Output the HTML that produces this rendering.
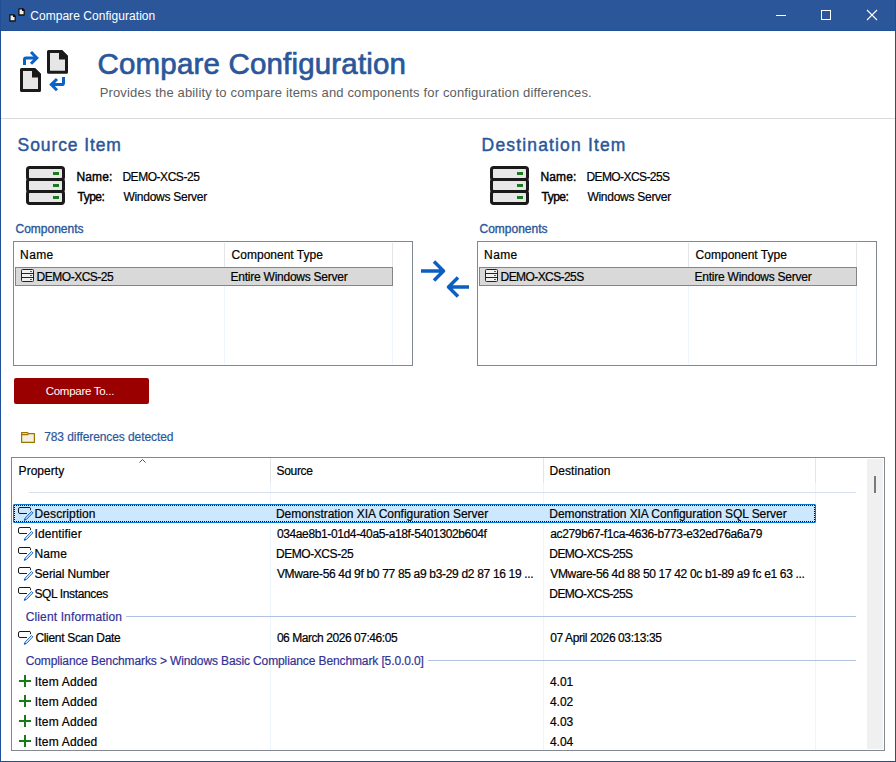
<!DOCTYPE html>
<html><head><meta charset="utf-8"><style>
html,body{margin:0;padding:0;}
body{width:896px;height:762px;overflow:hidden;position:relative;background:#fff;font-family:"Liberation Sans",sans-serif;}
.t{position:absolute;white-space:pre;line-height:40px;font-family:"Liberation Sans",sans-serif;}
.a{position:absolute;}
svg{position:absolute;overflow:visible;}
</style></head><body>
<!-- window frame -->
<div class="a" style="left:0;top:0;width:896px;height:30px;background:#2b579a"></div>
<div class="a" style="left:0;top:30px;width:896px;height:1px;background:#1f4f96"></div>
<div class="a" style="left:0;top:0;width:1px;height:762px;background:#1f4f96"></div>
<div class="a" style="left:895px;top:0;width:1px;height:762px;background:#1f4f96"></div>
<div class="a" style="left:0;top:761px;width:896px;height:1px;background:#1f4f96"></div>
<!-- title icon -->
<svg style="left:0;top:0" width="30" height="30" viewBox="0 0 30 30">
  <path d="M10.1 12.5V10.6H13.6" fill="none" stroke="#0a62c4" stroke-width="1.2"/>
  <path d="M12.6 9.2L14 10.6L12.6 12" fill="none" stroke="#0a62c4" stroke-width="1.2"/>
  <path d="M23.6 17.2V19.2H20" fill="none" stroke="#0a62c4" stroke-width="1.2"/>
  <path d="M21 17.8L19.6 19.2L21 20.6" fill="none" stroke="#0a62c4" stroke-width="1.2"/>
  <path d="M18.9 8.9H22.6L24.2 10.5V15H18.9Z" fill="#ececec" stroke="#111" stroke-width="1.3" stroke-linejoin="round"/>
  <path d="M22 8.3H23L24.8 10.1V11.1H22Z" fill="#111"/>
  <path d="M9.9 14.9H13.6L15.2 16.5V21H9.9Z" fill="#ececec" stroke="#111" stroke-width="1.3" stroke-linejoin="round"/>
  <path d="M13 14.3H14L15.8 16.1V17.1H13Z" fill="#111"/>
</svg>
<!-- window controls -->
<div class="a" style="left:776px;top:15px;width:10px;height:1px;background:#fff"></div>
<div class="a" style="left:821px;top:10px;width:8px;height:8px;border:1px solid #fff"></div>
<svg style="left:866px;top:9px" width="12" height="12" viewBox="0 0 12 12">
  <path d="M1 1L11 11M11 1L1 11" stroke="#fff" stroke-width="1.1"/>
</svg>
<!-- header icon -->
<svg style="left:0;top:40px" width="80" height="60" viewBox="0 40 80 60">
  <path d="M48.5 51.5H61.5L66.5 56.5V72.3H48.5Z" fill="#e6e6e6" stroke="#1a1a1a" stroke-width="3" stroke-linejoin="round"/>
  <path d="M59 50H62L68 56V59.5H59Z" fill="#1a1a1a"/>
  <path d="M21.5 69.5H34.5L39.5 74.5V90.4H21.5Z" fill="#e6e6e6" stroke="#1a1a1a" stroke-width="3" stroke-linejoin="round"/>
  <path d="M32 68H35L41 74V77.5H32Z" fill="#1a1a1a"/>
  <path d="M24.5 65V59.5Q24.5 58 26 58H36" fill="none" stroke="#0a62c4" stroke-width="3"/>
  <path d="M31 52L36.8 57.9L31 63.8" fill="none" stroke="#0a62c4" stroke-width="3"/>
  <path d="M63.5 77V83Q63.5 84.6 62 84.6H52" fill="none" stroke="#0a62c4" stroke-width="3"/>
  <path d="M57 79L51.3 84.6L57 90.3" fill="none" stroke="#0a62c4" stroke-width="3"/>
</svg>
<div class="a" style="left:1px;top:118px;width:894px;height:1px;background:#dadada"></div>
<!-- big server icons -->
<svg style="left:26px;top:166px" width="39" height="39" viewBox="0 0 39 39">
  <rect x="1.5" y="1.5" width="36" height="12" rx="2.2" fill="#e8e8e8" stroke="#1a1a1a" stroke-width="3"/>
  <rect x="1.5" y="13.5" width="36" height="12" rx="2.2" fill="#e8e8e8" stroke="#1a1a1a" stroke-width="3"/>
  <rect x="1.5" y="25.5" width="36" height="12" rx="2.2" fill="#e8e8e8" stroke="#1a1a1a" stroke-width="3"/>
  <rect x="27" y="6" width="6" height="3" fill="#1b7a1b"/>
  <rect x="27" y="18" width="6" height="3" fill="#1b7a1b"/>
  <rect x="27" y="30" width="6" height="3" fill="#1b7a1b"/>
</svg>
<svg style="left:490px;top:166px" width="39" height="39" viewBox="0 0 39 39">
  <rect x="1.5" y="1.5" width="36" height="12" rx="2.2" fill="#e8e8e8" stroke="#1a1a1a" stroke-width="3"/>
  <rect x="1.5" y="13.5" width="36" height="12" rx="2.2" fill="#e8e8e8" stroke="#1a1a1a" stroke-width="3"/>
  <rect x="1.5" y="25.5" width="36" height="12" rx="2.2" fill="#e8e8e8" stroke="#1a1a1a" stroke-width="3"/>
  <rect x="27" y="6" width="6" height="3" fill="#1b7a1b"/>
  <rect x="27" y="18" width="6" height="3" fill="#1b7a1b"/>
  <rect x="27" y="30" width="6" height="3" fill="#1b7a1b"/>
</svg>
<!-- list boxes -->
<div class="a" style="left:13px;top:241px;width:398px;height:123px;border:1px solid #828790"></div>
<div class="a" style="left:224px;top:243px;width:1px;height:24px;background:#e5e5e5"></div>
<div class="a" style="left:224px;top:267px;width:1px;height:97px;background:#eef4fd"></div>
<div class="a" style="left:392px;top:243px;width:1px;height:24px;background:#e5e5e5"></div>
<div class="a" style="left:392px;top:267px;width:1px;height:97px;background:#eef4fd"></div>
<div class="a" style="left:15px;top:267px;width:376px;height:17px;border:1px solid #858585;background:#d9d9d9"></div>
<svg style="left:21px;top:269px" width="13" height="13" viewBox="0 0 13 13">
  <rect x="0.5" y="0.5" width="12" height="12" rx="1" fill="#f0f0f0" stroke="#222" stroke-width="1"/>
  <path d="M0.5 4.5h12M0.5 8.5h12" stroke="#222" stroke-width="1"/>
  <path d="M9 2.5h2M9 6.5h2M9 10.5h2" stroke="#1b8a1b" stroke-width="1"/>
</svg>
<div class="a" style="left:477px;top:241px;width:398px;height:123px;border:1px solid #828790"></div>
<div class="a" style="left:688px;top:243px;width:1px;height:24px;background:#e5e5e5"></div>
<div class="a" style="left:688px;top:267px;width:1px;height:97px;background:#eef4fd"></div>
<div class="a" style="left:856px;top:243px;width:1px;height:24px;background:#e5e5e5"></div>
<div class="a" style="left:856px;top:267px;width:1px;height:97px;background:#eef4fd"></div>
<div class="a" style="left:479px;top:267px;width:376px;height:17px;border:1px solid #858585;background:#d9d9d9"></div>
<svg style="left:485px;top:269px" width="13" height="13" viewBox="0 0 13 13">
  <rect x="0.5" y="0.5" width="12" height="12" rx="1" fill="#f0f0f0" stroke="#222" stroke-width="1"/>
  <path d="M0.5 4.5h12M0.5 8.5h12" stroke="#222" stroke-width="1"/>
  <path d="M9 2.5h2M9 6.5h2M9 10.5h2" stroke="#1b8a1b" stroke-width="1"/>
</svg>
<!-- compare arrows -->
<svg style="left:410px;top:250px" width="70" height="60" viewBox="0 0 70 60">
  <path d="M11 21h21M24 11.5l9.5 9.5l-9.5 9.5" fill="none" stroke="#0a5fc0" stroke-width="3.5" stroke-linejoin="round"/>
  <path d="M59 37h-21M48 27.5l-9.5 9.5l9.5 9.5" fill="none" stroke="#0a5fc0" stroke-width="3.5" stroke-linejoin="round"/>
</svg>
<!-- button -->
<div class="a" style="left:14px;top:378px;width:135px;height:26px;background:#9b0000;border-radius:2px"></div>
<!-- folder -->
<svg style="left:20px;top:431px" width="17" height="14" viewBox="0 0 17 14">
  <path d="M1.6 1.6H7.6L8.6 2.6H14.4V11.4H1.6Z" fill="#f3efe3" stroke="#9c7400" stroke-width="1.2" stroke-linejoin="round"/>
  <path d="M1.6 3.6H7.6L8.6 2.6" fill="none" stroke="#9c7400" stroke-width="1.2"/>
</svg>
<!-- grid -->
<div class="a" style="left:11px;top:457px;width:872px;height:292px;border:1px solid #828790"></div>
<div class="a" style="left:270px;top:458px;width:1px;height:25px;background:#e5e5e5"></div>
<div class="a" style="left:270px;top:483px;width:1px;height:267px;background:#eef4fd"></div>
<div class="a" style="left:543px;top:458px;width:1px;height:25px;background:#e5e5e5"></div>
<div class="a" style="left:543px;top:483px;width:1px;height:267px;background:#eef4fd"></div>
<div class="a" style="left:815px;top:458px;width:1px;height:25px;background:#e5e5e5"></div>
<div class="a" style="left:815px;top:483px;width:1px;height:267px;background:#eef4fd"></div>
<svg style="left:130px;top:455px" width="20" height="12" viewBox="0 0 20 12">
  <path d="M9.5 7.5l3-3l3 3" fill="none" stroke="#555" stroke-width="1"/>
</svg>
<div class="a" style="left:867px;top:459px;width:16px;height:290px;background:#f0f0f0"></div>
<div class="a" style="left:874px;top:476px;width:2px;height:17px;background:#7a7a7a"></div>
<div class="a" style="left:29px;top:492px;width:827px;height:1px;background:#d8dff0"></div>
<div class="a" style="left:13px;top:504px;width:801px;height:17px;border:1px solid #0078d7;background:#cce8ff;border-radius:1px"></div>
<div class="a" style="left:14px;top:505px;width:799px;height:15px;border:1px dotted #000"></div>
<div class="a" style="left:126px;top:616px;width:730px;height:1px;background:#b1c2e1"></div>
<div class="a" style="left:428px;top:660px;width:428px;height:1px;background:#b1c2e1"></div>
<!-- row icons -->
<svg style="left:18px;top:507px" width="18" height="16" viewBox="0 0 18 16">
  <path d="M9 6.5H2a1.5 1.5 0 0 1-1.5-1.5V2A1.5 1.5 0 0 1 2 0.5h10A1.5 1.5 0 0 1 12.5 2V3.2" fill="none" stroke="#1a1a1a" stroke-width="1"/>
  <path d="M13.56 4.56L14.84 5.84L8.5 12.38L6.3 13.3L7.22 11.1Z" fill="none" stroke="#0a5fc0" stroke-width="1" stroke-linejoin="round"/>
  <path d="M6.1 13.5L6.9 11.4L8.3 12.7Z" fill="#0a5fc0"/>
</svg>
<svg style="left:18px;top:527px" width="18" height="16" viewBox="0 0 18 16">
  <path d="M9 6.5H2a1.5 1.5 0 0 1-1.5-1.5V2A1.5 1.5 0 0 1 2 0.5h10A1.5 1.5 0 0 1 12.5 2V3.2" fill="none" stroke="#1a1a1a" stroke-width="1"/>
  <path d="M13.56 4.56L14.84 5.84L8.5 12.38L6.3 13.3L7.22 11.1Z" fill="none" stroke="#0a5fc0" stroke-width="1" stroke-linejoin="round"/>
  <path d="M6.1 13.5L6.9 11.4L8.3 12.7Z" fill="#0a5fc0"/>
</svg>
<svg style="left:18px;top:547px" width="18" height="16" viewBox="0 0 18 16">
  <path d="M9 6.5H2a1.5 1.5 0 0 1-1.5-1.5V2A1.5 1.5 0 0 1 2 0.5h10A1.5 1.5 0 0 1 12.5 2V3.2" fill="none" stroke="#1a1a1a" stroke-width="1"/>
  <path d="M13.56 4.56L14.84 5.84L8.5 12.38L6.3 13.3L7.22 11.1Z" fill="none" stroke="#0a5fc0" stroke-width="1" stroke-linejoin="round"/>
  <path d="M6.1 13.5L6.9 11.4L8.3 12.7Z" fill="#0a5fc0"/>
</svg>
<svg style="left:18px;top:567px" width="18" height="16" viewBox="0 0 18 16">
  <path d="M9 6.5H2a1.5 1.5 0 0 1-1.5-1.5V2A1.5 1.5 0 0 1 2 0.5h10A1.5 1.5 0 0 1 12.5 2V3.2" fill="none" stroke="#1a1a1a" stroke-width="1"/>
  <path d="M13.56 4.56L14.84 5.84L8.5 12.38L6.3 13.3L7.22 11.1Z" fill="none" stroke="#0a5fc0" stroke-width="1" stroke-linejoin="round"/>
  <path d="M6.1 13.5L6.9 11.4L8.3 12.7Z" fill="#0a5fc0"/>
</svg>
<svg style="left:18px;top:587px" width="18" height="16" viewBox="0 0 18 16">
  <path d="M9 6.5H2a1.5 1.5 0 0 1-1.5-1.5V2A1.5 1.5 0 0 1 2 0.5h10A1.5 1.5 0 0 1 12.5 2V3.2" fill="none" stroke="#1a1a1a" stroke-width="1"/>
  <path d="M13.56 4.56L14.84 5.84L8.5 12.38L6.3 13.3L7.22 11.1Z" fill="none" stroke="#0a5fc0" stroke-width="1" stroke-linejoin="round"/>
  <path d="M6.1 13.5L6.9 11.4L8.3 12.7Z" fill="#0a5fc0"/>
</svg>
<svg style="left:18px;top:631px" width="18" height="16" viewBox="0 0 18 16">
  <path d="M9 6.5H2a1.5 1.5 0 0 1-1.5-1.5V2A1.5 1.5 0 0 1 2 0.5h10A1.5 1.5 0 0 1 12.5 2V3.2" fill="none" stroke="#1a1a1a" stroke-width="1"/>
  <path d="M13.56 4.56L14.84 5.84L8.5 12.38L6.3 13.3L7.22 11.1Z" fill="none" stroke="#0a5fc0" stroke-width="1" stroke-linejoin="round"/>
  <path d="M6.1 13.5L6.9 11.4L8.3 12.7Z" fill="#0a5fc0"/>
</svg>
<svg style="left:19px;top:675px" width="12" height="12" viewBox="0 0 12 12">
  <path d="M0 6h12M6 0v12" stroke="#1a7a1a" stroke-width="2"/>
</svg>
<svg style="left:19px;top:695px" width="12" height="12" viewBox="0 0 12 12">
  <path d="M0 6h12M6 0v12" stroke="#1a7a1a" stroke-width="2"/>
</svg>
<svg style="left:19px;top:715px" width="12" height="12" viewBox="0 0 12 12">
  <path d="M0 6h12M6 0v12" stroke="#1a7a1a" stroke-width="2"/>
</svg>
<svg style="left:19px;top:735px" width="12" height="12" viewBox="0 0 12 12">
  <path d="M0 6h12M6 0v12" stroke="#1a7a1a" stroke-width="2"/>
</svg>

<div class='t' style='left:30.20px;top:-4.00px;font-size:12px;font-weight:400;color:#fff;letter-spacing:0.050px;-webkit-text-stroke:0px #fff;'>Compare Configuration</div><div class='t' style='left:97.50px;top:44.00px;font-size:29.5px;font-weight:400;color:#2b579a;letter-spacing:0.175px;-webkit-text-stroke:0.7px #2b579a;'>Compare Configuration</div><div class='t' style='left:99.70px;top:73.00px;font-size:13px;font-weight:400;color:#5e5e5e;letter-spacing:0.152px;-webkit-text-stroke:0px #5e5e5e;'>Provides the ability to compare items and components for configuration differences.</div><div class='t' style='left:17.60px;top:125.00px;font-size:17.5px;font-weight:400;color:#2b579a;letter-spacing:0.900px;-webkit-text-stroke:0.45px #2b579a;'>Source Item</div><div class='t' style='left:76.50px;top:157.00px;font-size:12px;font-weight:400;color:#000;letter-spacing:0.125px;-webkit-text-stroke:0.4px #000;'>Name:</div><div class='t' style='left:122.40px;top:157.00px;font-size:12px;font-weight:400;color:#000;letter-spacing:-0.460px;-webkit-text-stroke:0.2px #000;'>DEMO-XCS-25</div><div class='t' style='left:77.50px;top:177.00px;font-size:12px;font-weight:400;color:#000;letter-spacing:-0.500px;-webkit-text-stroke:0.4px #000;'>Type:</div><div class='t' style='left:123.40px;top:177.00px;font-size:12px;font-weight:400;color:#000;letter-spacing:-0.269px;-webkit-text-stroke:0.2px #000;'>Windows Server</div><div class='t' style='left:15.50px;top:209.00px;font-size:12px;font-weight:400;color:#2b579a;letter-spacing:0.000px;-webkit-text-stroke:0.35px #2b579a;'>Components</div><div class='t' style='left:20.10px;top:235.00px;font-size:12px;font-weight:400;color:#000;letter-spacing:0.367px;-webkit-text-stroke:0.2px #000;'>Name</div><div class='t' style='left:231.60px;top:235.00px;font-size:12px;font-weight:400;color:#000;letter-spacing:0.008px;-webkit-text-stroke:0.2px #000;'>Component Type</div><div class='t' style='left:36.60px;top:257.00px;font-size:12px;font-weight:400;color:#000;letter-spacing:-0.490px;-webkit-text-stroke:0.2px #000;'>DEMO-XCS-25</div><div class='t' style='left:230.60px;top:257.00px;font-size:12px;font-weight:400;color:#000;letter-spacing:-0.245px;-webkit-text-stroke:0.2px #000;'>Entire Windows Server</div><div class='t' style='left:481.60px;top:125.00px;font-size:17.5px;font-weight:400;color:#2b579a;letter-spacing:1.160px;-webkit-text-stroke:0.45px #2b579a;'>Destination Item</div><div class='t' style='left:540.50px;top:157.00px;font-size:12px;font-weight:400;color:#000;letter-spacing:0.125px;-webkit-text-stroke:0.4px #000;'>Name:</div><div class='t' style='left:586.40px;top:157.00px;font-size:12px;font-weight:400;color:#000;letter-spacing:-0.582px;-webkit-text-stroke:0.2px #000;'>DEMO-XCS-25S</div><div class='t' style='left:541.50px;top:177.00px;font-size:12px;font-weight:400;color:#000;letter-spacing:-0.500px;-webkit-text-stroke:0.4px #000;'>Type:</div><div class='t' style='left:587.40px;top:177.00px;font-size:12px;font-weight:400;color:#000;letter-spacing:-0.269px;-webkit-text-stroke:0.2px #000;'>Windows Server</div><div class='t' style='left:479.50px;top:209.00px;font-size:12px;font-weight:400;color:#2b579a;letter-spacing:0.000px;-webkit-text-stroke:0.35px #2b579a;'>Components</div><div class='t' style='left:484.10px;top:235.00px;font-size:12px;font-weight:400;color:#000;letter-spacing:0.367px;-webkit-text-stroke:0.2px #000;'>Name</div><div class='t' style='left:695.60px;top:235.00px;font-size:12px;font-weight:400;color:#000;letter-spacing:0.008px;-webkit-text-stroke:0.2px #000;'>Component Type</div><div class='t' style='left:500.60px;top:257.00px;font-size:12px;font-weight:400;color:#000;letter-spacing:-0.582px;-webkit-text-stroke:0.2px #000;'>DEMO-XCS-25S</div><div class='t' style='left:694.60px;top:257.00px;font-size:12px;font-weight:400;color:#000;letter-spacing:-0.245px;-webkit-text-stroke:0.2px #000;'>Entire Windows Server</div><div class='t' style='left:45.70px;top:371.00px;font-size:11.5px;font-weight:400;color:#fff;letter-spacing:-0.275px;-webkit-text-stroke:0px #fff;'>Compare To...</div><div class='t' style='left:44.20px;top:417.00px;font-size:12px;font-weight:400;color:#2b579a;letter-spacing:-0.083px;-webkit-text-stroke:0.2px #2b579a;'>783 differences detected</div><div class='t' style='left:18.60px;top:451.00px;font-size:12px;font-weight:400;color:#000;letter-spacing:0.029px;-webkit-text-stroke:0.2px #000;'>Property</div><div class='t' style='left:276.50px;top:451.00px;font-size:12px;font-weight:400;color:#000;letter-spacing:-0.320px;-webkit-text-stroke:0.2px #000;'>Source</div><div class='t' style='left:549.50px;top:451.00px;font-size:12px;font-weight:400;color:#000;letter-spacing:0.080px;-webkit-text-stroke:0.2px #000;'>Destination</div><div class='t' style='left:34.50px;top:494.00px;font-size:12px;font-weight:400;color:#000;letter-spacing:0.100px;-webkit-text-stroke:0.2px #000;'>Description</div><div class='t' style='left:275.90px;top:494.00px;font-size:12px;font-weight:400;color:#000;letter-spacing:-0.032px;-webkit-text-stroke:0.2px #000;'>Demonstration XIA Configuration Server</div><div class='t' style='left:549.30px;top:494.00px;font-size:12px;font-weight:400;color:#000;letter-spacing:-0.073px;-webkit-text-stroke:0.2px #000;'>Demonstration XIA Configuration SQL Server</div><div class='t' style='left:34.50px;top:514.00px;font-size:12px;font-weight:400;color:#000;letter-spacing:0.122px;-webkit-text-stroke:0.2px #000;'>Identifier</div><div class='t' style='left:276.90px;top:514.00px;font-size:12px;font-weight:400;color:#000;letter-spacing:-0.369px;-webkit-text-stroke:0.2px #000;'>034ae8b1-01d4-40a5-a18f-5401302b604f</div><div class='t' style='left:550.30px;top:514.00px;font-size:12px;font-weight:400;color:#000;letter-spacing:-0.366px;-webkit-text-stroke:0.2px #000;'>ac279b67-f1ca-4636-b773-e32ed76a6a79</div><div class='t' style='left:34.50px;top:534.00px;font-size:12px;font-weight:400;color:#000;letter-spacing:0.100px;-webkit-text-stroke:0.2px #000;'>Name</div><div class='t' style='left:275.90px;top:534.00px;font-size:12px;font-weight:400;color:#000;letter-spacing:-0.420px;-webkit-text-stroke:0.2px #000;'>DEMO-XCS-25</div><div class='t' style='left:549.30px;top:534.00px;font-size:12px;font-weight:400;color:#000;letter-spacing:-0.573px;-webkit-text-stroke:0.2px #000;'>DEMO-XCS-25S</div><div class='t' style='left:34.50px;top:554.00px;font-size:12px;font-weight:400;color:#000;letter-spacing:-0.133px;-webkit-text-stroke:0.2px #000;'>Serial Number</div><div class='t' style='left:276.90px;top:554.00px;font-size:12px;font-weight:400;color:#000;letter-spacing:-0.321px;-webkit-text-stroke:0.2px #000;'>VMware-56 4d 9f b0 77 85 a9 b3-29 d2 87 16 19 ...</div><div class='t' style='left:550.30px;top:554.00px;font-size:12px;font-weight:400;color:#000;letter-spacing:-0.340px;-webkit-text-stroke:0.2px #000;'>VMware-56 4d 88 50 17 42 0c b1-89 a9 fc e1 63 ...</div><div class='t' style='left:34.50px;top:574.00px;font-size:12px;font-weight:400;color:#000;letter-spacing:-0.383px;-webkit-text-stroke:0.2px #000;'>SQL Instances</div><div class='t' style='left:549.30px;top:574.00px;font-size:12px;font-weight:400;color:#000;letter-spacing:-0.573px;-webkit-text-stroke:0.2px #000;'>DEMO-XCS-25S</div><div class='t' style='left:25.70px;top:597.00px;font-size:12px;font-weight:400;color:#323296;letter-spacing:0.135px;-webkit-text-stroke:0.2px #323296;'>Client Information</div><div class='t' style='left:35.40px;top:618.00px;font-size:12px;font-weight:400;color:#000;letter-spacing:-0.313px;-webkit-text-stroke:0.2px #000;'>Client Scan Date</div><div class='t' style='left:276.90px;top:618.00px;font-size:12px;font-weight:400;color:#000;letter-spacing:-0.448px;-webkit-text-stroke:0.2px #000;'>06 March 2026 07:46:05</div><div class='t' style='left:550.30px;top:618.00px;font-size:12px;font-weight:400;color:#000;letter-spacing:-0.400px;-webkit-text-stroke:0.2px #000;'>07 April 2026 03:13:35</div><div class='t' style='left:25.70px;top:641.00px;font-size:12px;font-weight:400;color:#323296;letter-spacing:-0.115px;-webkit-text-stroke:0.2px #323296;'>Compliance Benchmarks &gt; Windows Basic Compliance Benchmark [5.0.0.0]</div><div class='t' style='left:34.70px;top:662.00px;font-size:12px;font-weight:400;color:#000;letter-spacing:0.200px;-webkit-text-stroke:0.2px #000;'>Item Added</div><div class='t' style='left:549.90px;top:662.00px;font-size:12px;font-weight:400;color:#000;letter-spacing:0.000px;-webkit-text-stroke:0.2px #000;'>4.01</div><div class='t' style='left:34.70px;top:682.00px;font-size:12px;font-weight:400;color:#000;letter-spacing:0.200px;-webkit-text-stroke:0.2px #000;'>Item Added</div><div class='t' style='left:549.90px;top:682.00px;font-size:12px;font-weight:400;color:#000;letter-spacing:0.000px;-webkit-text-stroke:0.2px #000;'>4.02</div><div class='t' style='left:34.70px;top:702.00px;font-size:12px;font-weight:400;color:#000;letter-spacing:0.200px;-webkit-text-stroke:0.2px #000;'>Item Added</div><div class='t' style='left:549.90px;top:702.00px;font-size:12px;font-weight:400;color:#000;letter-spacing:0.000px;-webkit-text-stroke:0.2px #000;'>4.03</div><div class='t' style='left:34.70px;top:722.00px;font-size:12px;font-weight:400;color:#000;letter-spacing:0.200px;-webkit-text-stroke:0.2px #000;'>Item Added</div><div class='t' style='left:549.90px;top:722.00px;font-size:12px;font-weight:400;color:#000;letter-spacing:0.000px;-webkit-text-stroke:0.2px #000;'>4.04</div>
</body></html>
